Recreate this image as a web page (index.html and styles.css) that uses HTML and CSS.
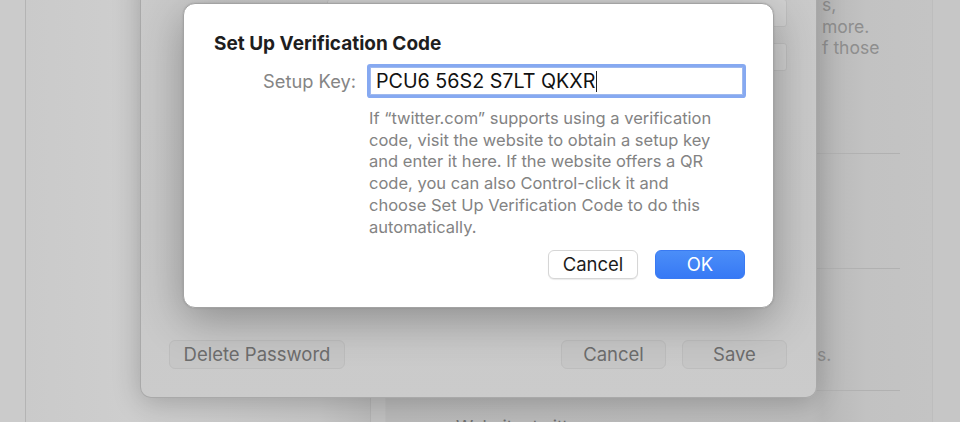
FILE: index.html
```html
<!DOCTYPE html>
<html>
<head>
<meta charset="utf-8">
<link rel="stylesheet" href="styles.css">
</head>
<body>
<div class="desktop">
  <div class="strip"></div>
  <div class="window">
    <div class="list-col"></div>
    <div class="gutter"></div>
    <div class="content-col">
      <div class="content-inner">
        <div class="intro">
          <div class="line">s,</div>
          <div class="line">more.</div>
          <div class="line">f those</div>
        </div>
        <div class="sep sep1"></div>
        <div class="sep sep2"></div>
        <div class="note">s.</div>
        <div class="sep sep3"></div>
        <div class="website">Website: twitter.com</div>
      </div>
    </div>
    <div class="edge-col"></div>
  </div>

  <div class="sheet">
    <div class="sheet-fields">
      <div class="sheet-field"></div>
      <div class="sheet-field"></div>
    </div>
    <div class="sheet-buttons">
      <button class="sheet-btn btn-delete">Delete Password</button>
      <div class="sheet-right">
        <button class="sheet-btn btn-wide">Cancel</button>
        <button class="sheet-btn btn-wide">Save</button>
      </div>
    </div>
  </div>

  <div class="dialog">
    <h1 class="title">Set Up Verification Code</h1>
    <div class="form-row">
      <label class="label">Setup Key:</label>
      <div class="field"><span class="field-text">PCU6 56S2 S7LT QKXR</span><span class="caret"></span></div>
    </div>
    <p class="help">If “twitter.com” supports using a verification<br>code, visit the website to obtain a setup key<br>and enter it here. If the website offers a QR<br>code, you can also Control-click it and<br>choose Set Up Verification Code to do this<br>automatically.</p>
    <div class="dialog-buttons">
      <button class="btn btn-cancel">Cancel</button>
      <button class="btn btn-ok">OK</button>
    </div>
  </div>
</div>
</body>
</html>
```
FILE: styles.css
```css
html, body {
  margin: 0;
  padding: 0;
  width: 960px;
  height: 422px;
  overflow: hidden;
  font-family: Inter, "Noto Sans", "Liberation Sans", sans-serif;
}

.desktop {
  position: relative;
  width: 960px;
  height: 422px;
  overflow: hidden;
  display: flex;
  background: #c9c9c9;
}

.strip {
  width: 25px;
  flex: none;
  background: #cbcbcb;
  border-right: 1px solid #b4b4b4;
}

.window {
  flex: 1;
  display: flex;
  background: #cacaca;
}

.list-col {
  width: 344px;
  flex: none;
  background: linear-gradient(90deg, #cacaca 0%, #cecece 30%, #c6c6c6 85%, #bbbbbb 100%);
  border-right: 1px solid #b3b3b3;
}

.gutter {
  width: 14px;
  flex: none;
  background: #c0c0c0;
  border-right: 1px solid #bcbcbc;
}

.content-col {
  width: 546px;
  flex: none;
  background: linear-gradient(90deg, #b9b9b9 0%, #bcbcbc 78%, #b8b8b8 80%, #c2c2c2 88%, #c4c4c4 100%);
  border-right: 1px solid #bdbdbd;
}

.content-inner {
  margin-right: 32px;
  display: flex;
  flex-direction: column;
  font-size: 17.5px;
  color: #8e8e8e;
}

.intro {
  margin-top: -6px;
  padding-left: 436px;
  line-height: 21.5px;
}

.sep {
  height: 1px;
  background: #b1b1b1;
}
.sep1 { margin-top: 94px; }
.sep2 { margin-top: 114px; }
.note {
  margin-top: 75px;
  padding-left: 431px;
  line-height: 22px;
}
.sep3 { margin-top: 24px; }
.website {
  margin-top: 25px;
  padding-left: 70px;
  line-height: 22px;
  color: #6e6e6e;
}

.edge-col {
  flex: 1;
  background: #c6c6c6;
}

/* ---------- sheet ---------- */
.sheet {
  position: absolute;
  left: 140px;
  top: -30px;
  width: 677px;
  height: 428px;
  box-sizing: border-box;
  padding: 0 29px 28px 28px;
  background: linear-gradient(180deg, #cacaca 0%, #c8c8c8 60%, #cbcbcb 100%);
  border: 1px solid #a9a9a9;
  border-top: none;
  border-radius: 0 0 11px 11px;
  box-shadow: 0 4px 28px rgba(0, 0, 0, 0.22);
  display: flex;
  flex-direction: column;
}

.sheet-fields {
  margin-top: 29px;
  display: flex;
  flex-direction: column;
  gap: 16px;
  align-items: flex-end;
}

.sheet-field {
  width: 460px;
  height: 28px;
  box-sizing: border-box;
  background: #d1d1d1;
  border: 1px solid #c0c0c0;
  border-radius: 3px;
}

.sheet-buttons {
  margin-top: auto;
  display: flex;
  justify-content: space-between;
  align-items: center;
}

.sheet-right {
  display: flex;
  gap: 16px;
}

.sheet-btn {
  height: 29px;
  box-sizing: border-box;
  border: 1px solid #bdbdbd;
  border-radius: 6px;
  background: #c6c6c6;
  color: #6d6d6d;
  font-family: inherit;
  font-size: 18.5px;
  padding: 0;
  line-height: 27px;
}

.btn-delete { width: 176px; }
.btn-wide { width: 105px; }

/* ---------- dialog ---------- */
.dialog {
  position: absolute;
  left: 183px;
  top: 3px;
  width: 591px;
  height: 305px;
  box-sizing: border-box;
  padding: 28px 28px 28px 30px;
  background: #ffffff;
  border: 1px solid #a3a3a3;
  border-radius: 12px;
  box-shadow: 0 12px 44px rgba(0, 0, 0, 0.3), 0 0 2px rgba(0, 0, 0, 0.15);
  display: flex;
  flex-direction: column;
}

.title {
  margin: 0;
  font-size: 19px;
  font-weight: 700;
  line-height: 24px;
  color: #1e1e1e;
}

.form-row {
  margin-top: 11px;
  display: flex;
  align-items: center;
}

.label {
  width: 142px;
  text-align: right;
  font-size: 18.3px;
  color: #858585;
  flex: none;
}

.field {
  margin-left: 14px;
  width: 373px;
  height: 28px;
  box-sizing: border-box;
  border: 1px solid #9fb9ee;
  box-shadow: 0 0 0 3px #86a9f1;
  border-radius: 1px;
  display: flex;
  align-items: center;
  padding-left: 5px;
  background: #fff;
}

.field-text {
  font-size: 19.7px;
  color: #111;
}

.caret {
  width: 1px;
  height: 21px;
  background: #222;
  margin-left: 1px;
}

.help {
  margin: 13px 0 0 155px;
  font-size: 16.5px;
  line-height: 21.7px;
  color: #838383;
  white-space: nowrap;
}

.dialog-buttons {
  margin-top: auto;
  display: flex;
  justify-content: flex-end;
  gap: 17px;
}

.btn {
  width: 90px;
  height: 29px;
  box-sizing: border-box;
  border-radius: 6px;
  font-family: inherit;
  font-size: 18.5px;
  padding: 0;
  line-height: 27px;
}

.btn-cancel {
  background: #ffffff;
  color: #1c1c1c;
  border: 1px solid #d6d6d6;
  box-shadow: 0 1px 1px rgba(0, 0, 0, 0.08);
}

.btn-ok {
  background: linear-gradient(180deg, #4b8ef8 0%, #3779f5 100%);
  color: #ffffff;
  border: 1px solid #3a7af2;
}
```
